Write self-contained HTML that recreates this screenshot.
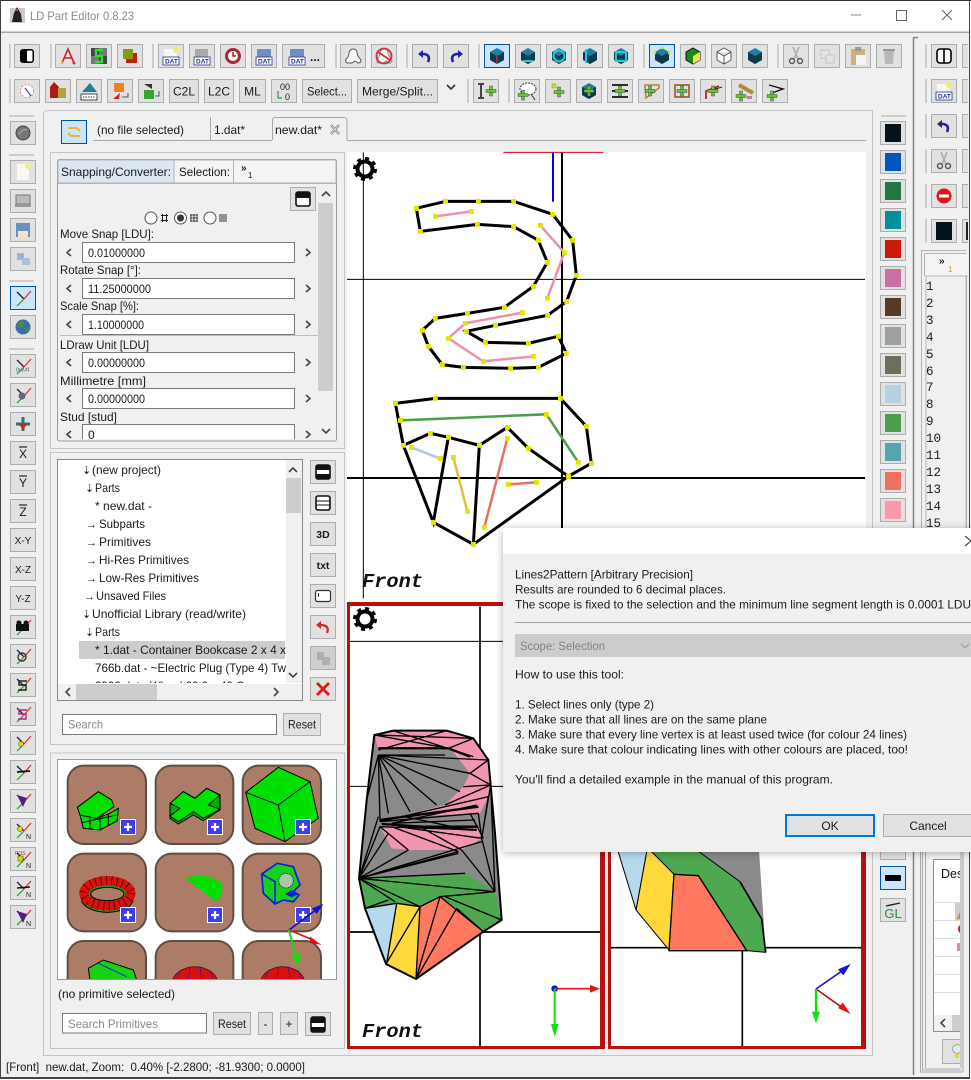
<!DOCTYPE html>
<html><head><meta charset="utf-8"><title>LD Part Editor 0.8.23</title>
<style>
html,body{margin:0;padding:0;background:#fff}
svg{display:block;font-family:"Liberation Sans",sans-serif;font-size:12px}
.t{fill:#1a1a1a}
.f{fill:#fff;stroke:#7a7a7a}
.ar{fill:none;stroke:#444;stroke-width:1.6}
.sep{stroke:#a8a8a8;stroke-width:1}
.dt{font-size:6.5px;font-weight:bold;fill:#223399}
</style></head><body>
<svg width="971" height="1080" viewBox="0 0 971 1080" xmlns="http://www.w3.org/2000/svg">
<defs>
<rect id="b" x=".5" y=".5" width="25" height="23" fill="#e1e1e1" stroke="#adadad"/>
<rect id="s" x=".5" y=".5" width="25" height="23" fill="#cce4f7" stroke="#005499"/>
<marker id="v" markerUnits="userSpaceOnUse" markerWidth="15" markerHeight="15" refX="7.5" refY="7.5"><rect width="15" height="15" fill="#e4e400"/></marker>
<g id="hex"><polygon points="13,4 20,8 20,16 13,20 6,16 6,8" fill="#1c7fa5"/><polygon points="13,12 20,8 20,16 13,20 6,16 6,8" fill="#0d3a4c"/></g>
<g id="pg"><rect x="-1.5" y="-5" width="3" height="10" fill="#68c23a" stroke="#333" stroke-width=".4"/><rect x="-5" y="-1.5" width="10" height="3" fill="#68c23a" stroke="#333" stroke-width=".4"/></g>
<g id="ax"><path d="M7 6L14 13" stroke="#223" stroke-width="1.3"/><path d="M14 13L21 5" stroke="#d33" stroke-width="1.3"/><path d="M14 13L7 20" stroke="#3a3" stroke-width="1.3"/></g>
<g id="pl"><rect width="15" height="15" fill="#3c3cf0" stroke="#fff"/><path d="M3.5 7.5H11.5M7.5 3.5V11.5" stroke="#fff" stroke-width="2.2"/></g>
<clipPath id="cTree"><rect x="58" y="460" width="228" height="223"/></clipPath>
<clipPath id="cPrim"><rect x="58" y="760" width="278" height="219"/></clipPath>
<clipPath id="cSnap"><rect x="58" y="184" width="260" height="255"/></clipPath>
<clipPath id="cR"><rect x="926" y="855" width="34" height="215"/></clipPath>
<clipPath id="cRb"><rect x="920" y="40" width="48" height="212"/></clipPath>
<filter id="sh" x="-5%" y="-5%" width="110%" height="110%"><feDropShadow dx="0" dy="1" stdDeviation="4" flood-color="#000" flood-opacity=".3"/></filter>
</defs>

<!-- window -->
<rect width="971" height="1080" fill="#fff"/>
<rect x="1" y="32" width="968" height="1046" fill="#f0f0f0"/>
<rect width="971" height="1" fill="#333"/>
<rect y="0" width="1" height="1079" fill="#444"/>
<rect x="969" y="0" width="1" height="1079" fill="#444"/>
<rect y="1077" width="970" height="2" fill="#444"/>
<rect x="1" y="31.5" width="968" height="1.5" fill="#a6a6a6"/>

<!-- title -->
<rect x="10" y="8" width="15" height="15" fill="#c9c9c9"/><path d="M17 7L21 14L22 22H12L14 13Z" fill="#222"/><rect x="16" y="9" width="2" height="2" fill="#c33"/>
<text x="30" y="20" fill="#8a8a8a" textLength="104" lengthAdjust="spacingAndGlyphs">LD Part Editor 0.8.23</text>
<path d="M851 15H861" stroke="#888"/><rect x="896.5" y="10.5" width="10" height="10" fill="none" stroke="#666"/><path d="M942 10L952 20M952 10L942 20" stroke="#666"/>

<!-- toolbar seps -->
<path class="sep" d="M10 44V68M51 44V68M153 44V68M336 44V68M407 44V68M479 44V68M644 44V68M778 44V68M926 44V68M10 79V103M468 79V103M509 79V103M926 79V103M926 114V138M926 149V173M926 184V208M926 219V243"/>

<!-- row 1 -->
<g transform="translate(14,44)"><use href="#b"/><rect x="6" y="5" width="14" height="14" rx="3" fill="#000"/><rect x="13" y="6.5" width="5.5" height="11" rx="1.5" fill="#fff"/></g>
<g transform="translate(55,44)"><use href="#b"/><path d="M7 19L13 5L19 19M9 14H17" fill="none" stroke="#c8242a" stroke-width="1.6"/><circle cx="7" cy="19" r="1.5" fill="#cc5"/><circle cx="19" cy="19" r="1.5" fill="#c33"/></g>
<g transform="translate(86,44)"><use href="#b"/><rect x="5" y="4" width="16" height="16" fill="#444"/><rect x="13" y="4" width="8" height="8" fill="#777"/><rect x="5" y="12" width="8" height="8" fill="#777"/><path d="M17 6H10V12H16V18H9" fill="none" stroke="#2ee02e" stroke-width="2.4"/></g>
<g transform="translate(117,44)"><use href="#b"/><rect x="9" y="9" width="11" height="10" fill="#c02010"/><rect x="6" y="5" width="10" height="10" fill="#8a9a10"/></g>
<g transform="translate(158,44)"><use href="#b"/><rect x="6" y="5" width="13" height="9" fill="#f6f6f6"/><circle cx="18" cy="6" r="3" fill="#eeee66"/><rect x="5" y="13" width="16" height="8" fill="#fff" stroke="#223399" stroke-width=".8"/><text x="7" y="19.5" class="dt">DAT</text></g>
<g transform="translate(189,44)"><use href="#b"/><rect x="6" y="5" width="13" height="9" fill="#a9a9a9"/><rect x="5" y="13" width="16" height="8" fill="#fff" stroke="#223399" stroke-width=".8"/><text x="7" y="19.5" class="dt">DAT</text></g>
<g transform="translate(220,44)"><use href="#b"/><circle cx="13" cy="12" r="6.5" fill="#fff" stroke="#a8293a" stroke-width="3"/><path d="M13 8V12H16" fill="none" stroke="#a8293a" stroke-width="1.6"/></g>
<g transform="translate(251,44)"><use href="#b"/><rect x="6" y="5" width="14" height="9" fill="#6f8fc2"/><rect x="5" y="13" width="16" height="8" fill="#fff" stroke="#223399" stroke-width=".8"/><text x="7" y="19.5" class="dt">DAT</text></g>
<g transform="translate(282,44)"><rect x=".5" y=".5" width="42" height="23" fill="#e1e1e1" stroke="#adadad"/><rect x="8" y="5" width="14" height="9" fill="#6f8fc2"/><rect x="7" y="13" width="16" height="8" fill="#fff" stroke="#223399" stroke-width=".8"/><text x="9" y="19.5" class="dt">DAT</text><text x="28" y="17" class="t" font-weight="bold">...</text></g>
<g transform="translate(340,44)"><use href="#b"/><path d="M8 19Q5 19 6 15Q9 13 9 9Q10 5 13 5Q17 5 17 9Q18 13 21 16Q21 19 18 19L15 17L12 19Z" fill="#fff" stroke="#555"/></g>
<g transform="translate(371,44)"><use href="#b"/><path d="M8 19Q5 19 6 15Q9 13 9 9Q10 5 13 5Q17 5 17 9Q18 13 21 16Q21 19 18 19L15 17L12 19Z" fill="#fff" stroke="#888"/><circle cx="13" cy="12" r="7.5" fill="none" stroke="#c33" stroke-width="1.8"/><path d="M7 8L19 16" stroke="#c33" stroke-width="1.8"/></g>
<g transform="translate(412,44)"><use href="#b"/><path d="M16 18Q19 11 12 10H9" fill="none" stroke="#2222a0" stroke-width="2.6"/><polygon points="6,10 11,6 11,14" fill="#2222a0"/></g>
<g transform="translate(443,44)"><use href="#b"/><path d="M10 18Q7 11 14 10H17" fill="none" stroke="#2222a0" stroke-width="2.6"/><polygon points="20,10 15,6 15,14" fill="#2222a0"/></g>
<g transform="translate(484,44)"><use href="#s"/><use href="#hex"/><path d="M13 12V20" stroke="#c33" stroke-width="1.4"/></g>
<g transform="translate(515,44)"><use href="#b"/><use href="#hex"/><path d="M8 17H18" stroke="#19d0e0" stroke-width="2"/></g>
<g transform="translate(546,44)"><use href="#b"/><use href="#hex"/><circle cx="13" cy="12" r="5.5" fill="none" stroke="#19d0e0" stroke-width="2"/></g>
<g transform="translate(577,44)"><use href="#b"/><use href="#hex"/><path d="M9 5V19" stroke="#19d0e0" stroke-width="2"/></g>
<g transform="translate(608,44)"><use href="#b"/><use href="#hex"/><rect x="8" y="8" width="10" height="9" fill="none" stroke="#19d0e0" stroke-width="2"/></g>
<g transform="translate(649,44)"><use href="#s"/><use href="#hex"/><circle cx="13" cy="4" r="1.3" fill="#dd0"/><circle cx="20" cy="9" r="1.3" fill="#dd0"/><circle cx="6" cy="9" r="1.3" fill="#dd0"/></g>
<g transform="translate(680,44)"><use href="#b"/><polygon points="13,4 20,8 20,16 13,20 6,16 6,8" fill="#1a8a1a" stroke="#111"/><polygon points="13,12 20,8 20,16 13,20" fill="#eedd55"/></g>
<g transform="translate(711,44)"><use href="#b"/><path d="M13 4L20 8V16L13 20L6 16V8ZM6 8L13 12L20 8M13 12V20" fill="#fff" stroke="#555"/></g>
<g transform="translate(742,44)"><use href="#b"/><use href="#hex"/></g>
<g transform="translate(783,44)"><use href="#b"/><path d="M10 3L15 15M16 3L11 15" stroke="#aaa" stroke-width="1.5"/><circle cx="9" cy="17" r="2.5" fill="none" stroke="#555" stroke-width="1.4"/><circle cx="17" cy="17" r="2.5" fill="none" stroke="#555" stroke-width="1.4"/></g>
<g transform="translate(814,44)"><use href="#b"/><rect x="7" y="6" width="8" height="8" fill="#e4e4e4" stroke="#c5c5c5"/><rect x="12" y="11" width="8" height="8" fill="#e4e4e4" stroke="#c5c5c5"/></g>
<g transform="translate(845,44)"><use href="#b"/><rect x="6" y="5" width="14" height="16" fill="#d0b080"/><rect x="10" y="3" width="6" height="4" fill="#999"/><rect x="11" y="11" width="10" height="10" fill="#f4f4f4"/></g>
<g transform="translate(876,44)"><use href="#b"/><path d="M8 7H18L17 20H9Z" fill="#b8b8b8"/><rect x="7" y="5" width="12" height="2" fill="#999"/></g>

<!-- row 2 -->
<g transform="translate(14,79)"><use href="#b"/><circle cx="13" cy="12" r="6.5" fill="#fff" stroke="#d88" stroke-dasharray="2 1.5"/><path d="M11 9L17 17" stroke="#55a" stroke-width="1.3"/></g>
<g transform="translate(45,79)"><use href="#b"/><rect x="5" y="8" width="9" height="11" fill="#b01818"/><polygon points="9,3 14,8 5,8" fill="#b01818"/><rect x="13" y="9" width="8" height="10" fill="#b5a338"/></g>
<g transform="translate(76,79)"><use href="#b"/><polygon points="6,13 14,4 21,13" fill="#1d7f9f"/><rect x="5" y="15" width="16" height="6" fill="#fff" stroke="#222" stroke-width=".8"/><path d="M7 18H19" stroke="#444" stroke-dasharray="1.5 1"/></g>
<g transform="translate(107,79)"><use href="#b"/><rect x="7" y="4" width="10" height="9" fill="#f08020"/><polygon points="6,20 13,14 12,20" fill="#c22"/><path d="M15 18H21V14" fill="none" stroke="#555"/></g>
<g transform="translate(138,79)"><use href="#b"/><rect x="6" y="11" width="10" height="9" fill="#2ea82e"/><polygon points="6,5 14,5 14,10" fill="#333"/><path d="M17 17H21V12" fill="none" stroke="#555"/></g>
<g transform="translate(169,79)"><rect x=".5" y=".5" width="29" height="23" fill="#e1e1e1" stroke="#adadad"/><text x="15" y="16.5" text-anchor="middle" class="t">C2L</text></g>
<g transform="translate(204,79)"><rect x=".5" y=".5" width="29" height="23" fill="#e1e1e1" stroke="#adadad"/><text x="15" y="16.5" text-anchor="middle" class="t">L2C</text></g>
<g transform="translate(239,79)"><rect x=".5" y=".5" width="26" height="23" fill="#e1e1e1" stroke="#adadad"/><text x="13.5" y="16.5" text-anchor="middle" class="t">ML</text></g>
<g transform="translate(271,79)"><use href="#b"/><text x="9" y="11" font-size="9" class="t">00</text><text x="14" y="21" font-size="9" class="t">0</text><path d="M7 12V19H11" fill="none" stroke="#393" stroke-width="1.2"/></g>
<g transform="translate(302,79)"><rect x=".5" y=".5" width="49" height="23" fill="#e1e1e1" stroke="#adadad"/><text x="5" y="16.5" class="t" textLength="40" lengthAdjust="spacingAndGlyphs">Select...</text></g>
<g transform="translate(357,79)"><rect x=".5" y=".5" width="80" height="23" fill="#e1e1e1" stroke="#adadad"/><text x="5" y="16.5" class="t" textLength="71" lengthAdjust="spacingAndGlyphs">Merge/Split...</text></g>
<path d="M447 85L451 89L455 85" fill="none" stroke="#333" stroke-width="1.6"/>
<g transform="translate(473,79)"><use href="#b"/><path d="M5 5H11M8 5V19M5 19H11" stroke="#444" stroke-width="2" fill="none"/><use href="#pg" x="18" y="12"/></g>
<g transform="translate(514,79)"><use href="#b"/><ellipse cx="14" cy="10" rx="8" ry="6" fill="#fff" stroke="#333" stroke-dasharray="2 1"/><path d="M17 15L21 21" stroke="#333"/><use href="#pg" x="9" y="16"/></g>
<g transform="translate(545,79)"><use href="#b"/><rect x="7" y="5" width="4" height="4" fill="#dd0" stroke="#888" stroke-width=".5"/><use href="#pg" x="14" y="13"/></g>
<g transform="translate(576,79)"><use href="#b"/><use href="#hex"/><use href="#pg" x="13" y="12"/></g>
<g transform="translate(607,79)"><use href="#b"/><path d="M5 6H21M5 12H21M5 18H21" stroke="#111" stroke-width="1.8"/><use href="#pg" x="13" y="12"/></g>
<g transform="translate(638,79)"><use href="#b"/><path d="M7 6H21V9L8 19Z" fill="none" stroke="#b4883a" stroke-width="1.6"/><use href="#pg" x="12" y="12"/></g>
<g transform="translate(669,79)"><use href="#b"/><rect x="6" y="6" width="14" height="12" fill="none" stroke="#a4643a" stroke-width="1.8"/><use href="#pg" x="13" y="12"/></g>
<g transform="translate(700,79)"><use href="#b"/><path d="M6 20V12L19 7" fill="none" stroke="#b22" stroke-width="1.8"/><path d="M9 12L22 8" stroke="#222"/><use href="#pg" x="13" y="12"/></g>
<g transform="translate(731,79)"><use href="#b"/><path d="M8 6L22 14" stroke="#b4883a" stroke-width="4"/><use href="#pg" x="10" y="17"/><rect x="16" y="17" width="5" height="3" fill="#a89"/></g>
<g transform="translate(762,79)"><use href="#b"/><path d="M7 6L21 10L10 14" fill="none" stroke="#111" stroke-width="1.4"/><use href="#pg" x="10" y="17"/></g>

<!-- left col seps -->
<path stroke="#a8a8a8" d="M9 116H34M9 155H34M9 281H34M9 349H34M881 116H906"/>
<!-- left col -->
<g transform="translate(10,121)"><use href="#b"/><circle cx="13" cy="12" r="7" fill="#777" stroke="#444"/><path d="M9 13Q13 7 17 9" fill="none" stroke="#aaa"/></g>
<g transform="translate(10,160)"><use href="#b"/><rect x="7" y="4" width="12" height="16" fill="#f8f8f0"/><circle cx="18" cy="6" r="3" fill="#eeee88"/></g>
<g transform="translate(10,189)"><use href="#b"/><rect x="6" y="6" width="14" height="9" fill="#bbb" stroke="#777"/><rect x="5" y="15" width="16" height="3" fill="#999"/></g>
<g transform="translate(10,218)"><use href="#b"/><rect x="6" y="5" width="14" height="14" fill="#6f8fc2"/><rect x="8" y="13" width="10" height="6" fill="#f4e6b8"/></g>
<g transform="translate(10,247)"><use href="#b"/><rect x="7" y="6" width="7" height="7" fill="#9db3d4"/><rect x="12" y="11" width="8" height="7" fill="#aac0dd"/></g>
<g transform="translate(10,286)"><use href="#s"/><use href="#ax"/></g>
<g transform="translate(10,315)"><use href="#b"/><circle cx="13" cy="12" r="7.5" fill="#3a6ea8"/><path d="M8 8L14 6L13 12L9 13ZM15 14L19 12L18 18Z" fill="#4b8f3a"/></g>
<g transform="translate(10,354)"><use href="#b"/><use href="#ax"/><text x="6" y="17" font-size="5" fill="#445">(x,y,z)</text></g>
<g transform="translate(10,383)"><use href="#b"/><use href="#ax"/><circle cx="12" cy="13" r="3.5" fill="#667"/></g>
<g transform="translate(10,412)"><use href="#b"/><path d="M13 5V19M6 12H20" stroke="#1a7a7a" stroke-width="3"/><polygon points="9,12 17,12 13,18" fill="#c22"/></g>
<g transform="translate(10,441)"><use href="#b"/><text x="13" y="17" text-anchor="middle" class="t" font-size="12">X</text><path d="M9 6H17" stroke="#222" stroke-width="1.2"/></g>
<g transform="translate(10,470)"><use href="#b"/><text x="13" y="17" text-anchor="middle" class="t" font-size="12">Y</text><path d="M9 6H17" stroke="#222" stroke-width="1.2"/></g>
<g transform="translate(10,499)"><use href="#b"/><text x="13" y="17" text-anchor="middle" class="t" font-size="12">Z</text><path d="M9 6H17" stroke="#222" stroke-width="1.2"/></g>
<g transform="translate(10,528)"><use href="#b"/><text x="13" y="16" text-anchor="middle" class="t" font-size="10">X-Y</text></g>
<g transform="translate(10,557)"><use href="#b"/><text x="13" y="16" text-anchor="middle" class="t" font-size="10">X-Z</text></g>
<g transform="translate(10,586)"><use href="#b"/><text x="13" y="16" text-anchor="middle" class="t" font-size="10">Y-Z</text></g>
<g transform="translate(10,615)"><use href="#b"/><use href="#ax"/><rect x="6" y="9" width="13" height="7" fill="#111"/><circle cx="9" cy="8" r="2.5" fill="#111"/><circle cx="16" cy="8" r="2.5" fill="#111"/></g>
<g transform="translate(10,644)"><use href="#b"/><use href="#ax"/><circle cx="12" cy="13" r="4" fill="none" stroke="#333" stroke-width="1.4"/></g>
<g transform="translate(10,673)"><use href="#b"/><use href="#ax"/><path d="M17 8H9V12H16V17H8" fill="none" stroke="#222" stroke-width="1.4"/></g>
<g transform="translate(10,702)"><use href="#b"/><use href="#ax"/><path d="M17 8H9V12H16V17H8" fill="none" stroke="#b28" stroke-width="1.4"/></g>
<g transform="translate(10,731)"><use href="#b"/><use href="#ax"/><circle cx="11" cy="13" r="2.5" fill="#dd0" stroke="#333" stroke-width=".5"/></g>
<g transform="translate(10,760)"><use href="#b"/><use href="#ax"/><path d="M7 12L20 11" stroke="#111" stroke-width="1.8"/></g>
<g transform="translate(10,789)"><use href="#b"/><use href="#ax"/><polygon points="7,6 17,9 13,18" fill="#502080"/></g>
<g transform="translate(10,818)"><use href="#b"/><use href="#ax"/><circle cx="10" cy="11" r="2.5" fill="#dd0" stroke="#333" stroke-width=".5"/><text x="16" y="21" font-size="7" class="t">N</text></g>
<g transform="translate(10,847)"><use href="#b"/><use href="#ax"/><text x="5" y="8" font-size="5" fill="#a33">POS</text><rect x="8" y="9" width="5" height="5" fill="#dd0" stroke="#333" stroke-width=".5"/><text x="16" y="21" font-size="7" class="t">N</text></g>
<g transform="translate(10,876)"><use href="#b"/><use href="#ax"/><path d="M7 12L20 11" stroke="#111" stroke-width="1.6"/><text x="16" y="21" font-size="7" class="t">N</text></g>
<g transform="translate(10,905)"><use href="#b"/><use href="#ax"/><polygon points="7,6 17,9 13,18" fill="#502080"/><text x="16" y="21" font-size="7" class="t">N</text></g>

<!-- main tab panel -->
<path d="M43.5 1055.5V115Q43.5 110.5 48 110.5H872.5V1055.5Z" fill="#f0f0f0" stroke="#c4c4c4"/>
<path d="M93 140.5H272M347 140.5H866" stroke="#a8a8a8"/>
<g transform="translate(61,120)"><rect x=".5" y=".5" width="25" height="23" fill="#cce4f7" stroke="#005499"/><path d="M7 8H16L19 11M19 16H10L7 13" fill="none" stroke="#e6b82e" stroke-width="2"/></g>
<text x="97" y="134" class="t" textLength="87" lengthAdjust="spacingAndGlyphs">(no file selected)</text>
<path d="M210.5 117V140" stroke="#a8a8a8"/>
<text x="214" y="134" class="t" textLength="31" lengthAdjust="spacingAndGlyphs">1.dat*</text>
<path d="M272.5 140V120Q272.5 117.5 275 117.5H344Q347 117.5 347 120V140" fill="#f0f0f0" stroke="#a8a8a8"/>
<text x="275" y="134" class="t" textLength="47" lengthAdjust="spacingAndGlyphs">new.dat*</text>
<path d="M331 125L339 134M339 125L331 134" stroke="#777" stroke-width="2.4"/><path d="M331 125L339 134M339 125L331 134" stroke="#eee" stroke-width=".9"/>

<!-- snap group -->
<rect x="50.5" y="152.5" width="294" height="296" fill="#f0f0f0" stroke="#c4c4c4"/>
<rect x="57.5" y="159.5" width="279" height="281.5" rx="2" fill="#f0f0f0" stroke="#9a9a9a"/>
<path d="M57.5 183.5H336" stroke="#b4b4b4"/>
<path d="M58 183V162Q58 160 60 160H174V183Z" fill="#dbe8f3" stroke="#b4b4b4"/>
<path d="M174 160H233.5V183H174Z" fill="#f4f4f4" stroke="#b4b4b4"/>
<path d="M233.5 160H336V183H233.5Z" fill="#f4f4f4" stroke="#b4b4b4"/>
<text x="61" y="176" class="t" textLength="110" lengthAdjust="spacingAndGlyphs">Snapping/Converter:</text>
<text x="179" y="176" class="t" textLength="51" lengthAdjust="spacingAndGlyphs">Selection:</text>
<text x="241" y="171" font-size="10" class="t" font-weight="bold">»</text><text x="248" y="178" font-size="8" class="t">1</text>
<!-- scrollbar -->
<rect x="318" y="186" width="15" height="253" fill="#f0f0f0"/><rect x="318" y="203" width="15" height="188" fill="#cdcdcd"/>
<path d="M322 196L326 192L330 196M322 429L326 433L330 429" class="ar"/>
<g transform="translate(290,187)"><use href="#b"/><rect x="6" y="5" width="14" height="14" rx="2" fill="#fff" stroke="#111" stroke-width="1.6"/><rect x="6" y="5" width="14" height="6" rx="1" fill="#111"/></g>
<!-- radios -->
<g fill="#fff" stroke="#555"><circle cx="151" cy="218" r="6"/><circle cx="180.500" cy="218" r="6"/><circle cx="210" cy="218" r="6"/></g><circle cx="180.500" cy="218" r="3.5" fill="#333"/>
<path d="M161 215.500H168M161 220.500H168M162.500 214V222M166.500 214V222" stroke="#222" fill="none"/>
<path d="M190 215H198M190 218H198M190 221H198M191 214V222M194 214V222M197 214V222" stroke="#222" fill="none" stroke-width=".8"/>
<path d="M219 215H227M219 217H227M219 219H227M219 221H227M220 214V222M222 214V222M224 214V222M226 214V222" stroke="#222" fill="none" stroke-width=".55"/>
<!-- fields -->
<g clip-path="url(#cSnap)">
<text x="60" y="238" class="t" textLength="94" lengthAdjust="spacingAndGlyphs">Move Snap [LDU]:</text>
<text x="60" y="274" class="t" textLength="81" lengthAdjust="spacingAndGlyphs">Rotate Snap [°]:</text>
<text x="60" y="310" class="t" textLength="79" lengthAdjust="spacingAndGlyphs">Scale Snap [%]:</text>
<path d="M60 335.500H318" stroke="#bdbdbd"/>
<text x="60" y="349" class="t" textLength="89" lengthAdjust="spacingAndGlyphs">LDraw Unit [LDU]</text>
<text x="60" y="385" class="t" textLength="86" lengthAdjust="spacingAndGlyphs">Millimetre [mm]</text>
<text x="60" y="421" class="t" textLength="57" lengthAdjust="spacingAndGlyphs">Stud [stud]</text>
<rect class="f" x="82.500" y="242.500" width="212" height="20"/><rect class="f" x="82.500" y="278.500" width="212" height="20"/><rect class="f" x="82.500" y="314.500" width="212" height="20"/><rect class="f" x="82.500" y="352.500" width="212" height="20"/><rect class="f" x="82.500" y="388.500" width="212" height="20"/><rect class="f" x="82.500" y="424.500" width="212" height="20"/>
<text x="88" y="257" class="t" textLength="57" lengthAdjust="spacingAndGlyphs">0.01000000</text>
<text x="88" y="293" class="t" textLength="63" lengthAdjust="spacingAndGlyphs">11.25000000</text>
<text x="88" y="329" class="t" textLength="56" lengthAdjust="spacingAndGlyphs">1.10000000</text>
<text x="88" y="367" class="t" textLength="57" lengthAdjust="spacingAndGlyphs">0.00000000</text>
<text x="88" y="403" class="t" textLength="57" lengthAdjust="spacingAndGlyphs">0.00000000</text>
<text x="88" y="439" class="t">0</text>
<path class="ar" d="M71 249L67 252.500L71 256M71 285L67 288.500L71 292M71 321L67 324.500L71 328M71 359L67 362.500L71 366M71 395L67 398.500L71 402M71 431L67 434.500L71 438M306 249L310 252.500L306 256M306 285L310 288.500L306 292M306 321L310 324.500L306 328M306 359L310 362.500L306 366M306 395L310 398.500L306 402M306 431L310 434.500L306 438"/>
</g>

<!-- tree group -->
<rect x="50.500" y="452.500" width="294" height="292" fill="#f0f0f0" stroke="#c4c4c4"/>
<rect x="57.500" y="459.500" width="245" height="241" fill="#fff" stroke="#8a8a8a"/>
<rect x="79" y="641" width="206" height="18" fill="#cdcdcd"/>
<g clip-path="url(#cTree)" class="t">
<text x="82" y="474" font-size="11">⇣</text><text x="92" y="474" textLength="69" lengthAdjust="spacingAndGlyphs">(new project)</text>
<text x="85" y="492" font-size="11">⇣</text><text x="95" y="492" textLength="25" lengthAdjust="spacingAndGlyphs">Parts</text>
<text x="95" y="510" textLength="57" lengthAdjust="spacingAndGlyphs">* new.dat -</text>
<text x="86" y="528" font-size="11">→</text><text x="99" y="528" textLength="46" lengthAdjust="spacingAndGlyphs">Subparts</text>
<text x="86" y="546" font-size="11">→</text><text x="99" y="546" textLength="52" lengthAdjust="spacingAndGlyphs">Primitives</text>
<text x="86" y="564" font-size="11">→</text><text x="99" y="564" textLength="90" lengthAdjust="spacingAndGlyphs">Hi-Res Primitives</text>
<text x="86" y="582" font-size="11">→</text><text x="99" y="582" textLength="100" lengthAdjust="spacingAndGlyphs">Low-Res Primitives</text>
<text x="84" y="600" font-size="11">→</text><text x="96" y="600" textLength="70" lengthAdjust="spacingAndGlyphs">Unsaved Files</text>
<text x="82" y="618" font-size="11">⇣</text><text x="92" y="618" textLength="154" lengthAdjust="spacingAndGlyphs">Unofficial Library (read/write)</text>
<text x="85" y="636" font-size="11">⇣</text><text x="95" y="636" textLength="25" lengthAdjust="spacingAndGlyphs">Parts</text>
<text x="95" y="654" textLength="191" lengthAdjust="spacingAndGlyphs">* 1.dat - Container Bookcase  2 x  4 x</text>
<text x="95" y="672" textLength="191" lengthAdjust="spacingAndGlyphs">766b.dat - ~Electric Plug (Type 4) Tw</text>
<text x="95" y="690" textLength="150" lengthAdjust="spacingAndGlyphs">2926.dat - Wheel 60.0 x 40 O</text>
</g>
<rect x="286" y="460" width="16" height="223" fill="#f0f0f0"/><rect x="286" y="478" width="15" height="35" fill="#cdcdcd"/>
<path class="ar" d="M289 472L293 468L297 472M289 673L293 677L297 673"/>
<rect x="58" y="684" width="244" height="16" fill="#f0f0f0"/><rect x="76" y="684" width="81" height="16" fill="#cdcdcd"/>
<path class="ar" d="M70 688L66 692L70 696M274 688L278 692L274 696"/>
<g transform="translate(310,460)"><use href="#b"/><rect x="6" y="5" width="14" height="14" rx="2" fill="#fff" stroke="#111" stroke-width="1.6"/><rect x="6" y="5" width="14" height="5" fill="#111"/><rect x="6" y="14" width="14" height="5" fill="#111"/></g>
<g transform="translate(310,491)"><use href="#b"/><rect x="6" y="5" width="14" height="14" rx="2" fill="#fff" stroke="#111" stroke-width="1.6"/><path d="M6 10H20M6 14H20" stroke="#111"/></g>
<g transform="translate(310,522)"><use href="#b"/><text x="13" y="16" text-anchor="middle" font-size="10.500" font-weight="bold" class="t">3D</text></g>
<g transform="translate(310,553)"><use href="#b"/><text x="13" y="16" text-anchor="middle" font-size="10.500" font-weight="bold" class="t">txt</text></g>
<g transform="translate(310,584)"><use href="#b"/><rect x="5.500" y="6.500" width="15" height="11" rx="2" fill="#fff" stroke="#333" stroke-width="1.2"/><path d="M8.500 9V13" stroke="#333"/></g>
<g transform="translate(310,615)"><use href="#b"/><path d="M17 18Q20 11 12 10H9" fill="none" stroke="#d02828" stroke-width="2.200"/><polygon points="6,10 11,6 11,14" fill="#d02828"/></g>
<g transform="translate(310,646)"><rect x=".5" y=".5" width="25" height="23" fill="#cfcfcf" stroke="#adadad"/><rect x="7" y="6" width="7" height="8" fill="#b0b0b0"/><rect x="12" y="11" width="8" height="8" fill="#b0b0b0"/></g>
<g transform="translate(310,677)"><use href="#b"/><path d="M7 6L19 18M19 6L7 18" stroke="#e01818" stroke-width="2.800"/></g>
<rect class="f" x="62.500" y="714.500" width="214" height="20"/><text x="68" y="728.500" fill="#8a8a8a" textLength="35" lengthAdjust="spacingAndGlyphs">Search</text>
<rect x="283.500" y="713.500" width="37" height="22" fill="#e1e1e1" stroke="#adadad"/><text x="288" y="728.500" class="t" textLength="28" lengthAdjust="spacingAndGlyphs">Reset</text>

<!-- primitives group -->
<rect x="50.500" y="753" width="294" height="295.500" fill="#f0f0f0" stroke="#c4c4c4"/>
<rect x="57.500" y="759.500" width="279" height="220" fill="#fff" stroke="#9a9a9a"/>
<g clip-path="url(#cPrim)"><g transform="translate(0,750) scale(.33333)">
<g fill="#ac7c66" stroke="#5c5046" stroke-width="6">
<rect x="203" y="47" width="235" height="235" rx="48"/><rect x="467" y="47" width="233" height="235" rx="48"/><rect x="728" y="47" width="235" height="235" rx="48"/>
<rect x="203" y="311" width="235" height="233" rx="48"/><rect x="467" y="311" width="233" height="233" rx="48"/><rect x="728" y="311" width="235" height="233" rx="48"/>
<rect x="203" y="573" width="235" height="233" rx="48"/><rect x="467" y="573" width="233" height="233" rx="48"/><rect x="728" y="573" width="235" height="233" rx="48"/></g>
<g stroke="#000" stroke-width="3" fill="#00e000">
<polygon points="240,195 250,235 300,240 352,212 355,175 330,190 290,205"/><path d="M245 218L350 195M270 205V238M300 200V240M325 192V226" fill="none"/>
<polygon points="232,172 295,125 335,150 342,170 290,205 240,195"/>
<polygon points="510,165 510,205 535,222 580,195 610,212 660,180 660,135 620,115 585,145 550,125" fill="#00b000"/>
<polygon points="510,160 550,125 585,145 620,115 660,135 625,165 660,178 610,205 580,185 535,215 510,198 540,175"/>
<polygon points="737,127 835,52 930,95 955,205 855,275 765,235"/><path d="M737 127L835 165L930 95M835 165L855 275" fill="none"/>
</g>
<ellipse cx="322" cy="445" rx="78" ry="42" fill="#18a018" stroke="#000" stroke-width="3"/>
<ellipse cx="322" cy="430" rx="70" ry="38" fill="none" stroke="#d81010" stroke-width="28"/><ellipse cx="322" cy="430" rx="70" ry="38" fill="none" stroke="#300" stroke-width="28" stroke-dasharray="2 14"/>
<ellipse cx="322" cy="432" rx="50" ry="20" fill="#ac7c66" stroke="#000" stroke-width="3"/>
<path d="M555 385Q620 365 665 400Q672 430 650 455Z" fill="#00e000"/>
<polygon points="785,372 832,340 880,350 900,405 880,425 897,435 880,455 850,450 825,462 790,430" fill="#18d018" stroke="#0020e0" stroke-width="5"/><path d="M785 372L825 395V462" fill="none" stroke="#0020e0" stroke-width="5"/><circle cx="858" cy="392" r="22" fill="#a8c8a8" stroke="#334" stroke-width="3" stroke-dasharray="5 3"/><polygon points="855,432 875,420 895,432 875,442" fill="#0020e0"/>
<polygon points="265,655 310,630 400,660 410,690 270,690" fill="#18d018" stroke="#000" stroke-width="3"/><path d="M295 640L380 680" stroke="#0030c0" stroke-width="3"/>
<ellipse cx="585" cy="705" rx="70" ry="55" fill="#d81010" stroke="#300" stroke-width="2"/><path d="M540 660L530 690M570 650L565 690M600 650L605 690M630 660L640 690" stroke="#2020c0" stroke-width="2"/>
<ellipse cx="848" cy="705" rx="68" ry="55" fill="#d81010" stroke="#300" stroke-width="2"/><path d="M805 660L795 690M835 650L830 690M865 650L870 690M895 660L905 690" stroke="#2020c0" stroke-width="2"/>
</g>
<g><use href="#pl" x="120.500" y="819.500"/><use href="#pl" x="207.500" y="819.500"/><use href="#pl" x="295.500" y="819.500"/><use href="#pl" x="120.500" y="907.500"/><use href="#pl" x="207.500" y="907.500"/><use href="#pl" x="295.500" y="907.500"/></g>
<g transform="translate(0,750) scale(.33333)">
<path d="M867 540L950 478" stroke="#1010e0" stroke-width="5"/><polygon points="970,462 935,475 950,492" fill="#1010e0"/>
<path d="M867 540L940 570" stroke="#e01010" stroke-width="5"/><polygon points="965,585 930,560 930,578" fill="#e01010"/>
<path d="M867 540L888 620" stroke="#10e010" stroke-width="6"/><polygon points="892,650 875,615 903,612" fill="#10e010"/>
</g></g>
<text x="58" y="998" class="t" textLength="117" lengthAdjust="spacingAndGlyphs">(no primitive selected)</text>
<rect class="f" x="62.500" y="1013.500" width="144" height="19.500"/><text x="68" y="1028" fill="#8a8a8a" textLength="90" lengthAdjust="spacingAndGlyphs">Search Primitives</text>
<rect x="213.500" y="1012.500" width="37" height="22" fill="#e1e1e1" stroke="#adadad"/><text x="218" y="1028" class="t" textLength="28" lengthAdjust="spacingAndGlyphs">Reset</text>
<rect x="258.500" y="1012.500" width="14" height="22" fill="#e1e1e1" stroke="#adadad"/><text x="265.500" y="1028" text-anchor="middle" class="t">-</text>
<rect x="280.500" y="1012.500" width="17" height="22" fill="#e1e1e1" stroke="#adadad"/><text x="289" y="1028" text-anchor="middle" class="t">+</text>
<g transform="translate(305,1012)"><use href="#b"/><rect x="6" y="5" width="14" height="15" rx="2" fill="#fff" stroke="#111" stroke-width="1.600"/><rect x="6" y="5" width="14" height="6" rx="1" fill="#111"/><rect x="6" y="15" width="14" height="5" rx="1" fill="#111"/></g>

<!-- status -->
<text x="6" y="1071" class="t" textLength="299" lengthAdjust="spacingAndGlyphs" xml:space="preserve">[Front]  new.dat, Zoom:  0.40% [-2.2800; -81.9300; 0.0000]</text>

<!-- viewport top -->
<rect x="347" y="152" width="519" height="450" fill="#fff"/>
<g transform="translate(345,150) scale(.33333)" fill="none">
<path d="M55 7V1345M6 388H1560" stroke="#000" stroke-width="3"/>
<path d="M651 7V1345M6 984H1560" stroke="#000" stroke-width="6"/>
<path d="M475 7H775" stroke="#e00020" stroke-width="3"/><path d="M624 7V155" stroke="#0000e0" stroke-width="6"/>
<g stroke="#000" stroke-width="9" stroke-linejoin="miter" marker-start="url(#v)" marker-mid="url(#v)" marker-end="url(#v)">
<polyline points="214,175 302,154 400,154 506,154 623,193 683,271 694,376 665,454 608,496 452,526 364,544 421,577 550,580 640,559 664,610 580,652 497,655 355,652 292,644 250,589 232,541 271,505 367,490 478,472 565,409 607,337 580,271 506,230 397,223 226,244 214,175"/>
<polyline points="151,760 271,745 646,745 724,829 739,940 670,979 550,895 487,832 403,886 310,862 256,850 175,886 151,760"/>
<polyline points="175,886 265,1117 310,862"/><polyline points="403,886 385,1183"/><polyline points="265,1117 385,1183 670,979"/>
</g>
<g stroke-width="7.500" marker-start="url(#v)" marker-mid="url(#v)" marker-end="url(#v)">
<g stroke="#ef8fac"><polyline points="271,199 379,184"/><polyline points="586,226 658,308 607,445"/><polyline points="532,488 361,520 310,565 415,634 565,619"/></g>
<polyline stroke="#4b9f4a" points="166,811 604,793 700,937"/>
<polyline stroke="#b4c8d8" points="199,892 286,926"/>
<polyline stroke="#e6bc3c" points="325,922 367,1084"/>
<polyline stroke="#ea7060" points="487,865 418,1132"/><polyline stroke="#ea7060" points="490,1003 574,997"/>
</g></g>
<circle cx="365" cy="169" r="7.500" fill="none" stroke="#000" stroke-width="4"/><circle cx="365" cy="169" r="10.500" fill="none" stroke="#000" stroke-width="3" stroke-dasharray="4 4.200"/>
<text x="362" y="587" font-family="Liberation Mono,monospace" font-size="19" font-weight="bold" font-style="italic" fill="#111" textLength="61" lengthAdjust="spacingAndGlyphs">Front</text>

<!-- viewport bottom-left -->
<rect x="347" y="602" width="258" height="447" fill="#fff"/>
<g transform="translate(345,600) scale(.33333)">
<path d="M15 124H765M15 559H765" stroke="#000" stroke-width="3"/>
<path d="M405 20V1340M15 996H765" stroke="#000" stroke-width="5"/>
<polygon points="88,405 145,392 305,392 385,415 430,480 437,555 450,700 470,960 415,995 213,1137 123,1092 60,925 42,835 65,600" fill="#8a8a8a"/>
<g fill="#f296b0"><polygon points="90,410 145,392 305,392 385,415 430,480 375,520 320,450 100,450"/><polygon points="430,480 437,555 430,590 300,615 355,560 375,520"/><polygon points="105,665 300,615 430,590 405,640 180,650"/><polygon points="105,680 160,672 405,685 412,715 350,750 190,750 140,745"/></g>
<polygon points="42,835 360,820 450,875 470,960 415,995 335,925 280,890 225,920 60,925" fill="#4da84f"/>
<polygon points="60,925 155,910 125,1090" fill="#b8d8ec"/>
<polygon points="155,910 225,920 213,1137 123,1092" fill="#ffd83c"/>
<polygon points="225,920 285,890 335,925 415,995 213,1137" fill="#ff7860"/>
<g fill="none" stroke="#000" stroke-width="4">
<path d="M100 465L375 520M100 465L300 465M100 465L345 575M100 465L275 615M100 465L195 635M100 465L130 640M100 465L105 665M100 465L65 600M100 465L430 480M88 405L385 415M88 405L310 445M145 392L385 470M305 392L100 450M385 415L310 445M430 480L375 520M375 520L437 555M300 615L437 555M355 560L430 555"/>
<path d="M105 665L430 590M140 670L395 615M105 680L395 690M105 665L400 640M140 670L390 660M180 650L370 690M105 680L190 750M140 680L340 755M160 680L410 715M225 680L350 750M400 640L410 715M375 640L415 715M430 590L410 715M437 555L450 875M437 555L410 715M410 715L450 875M350 750L450 875"/>
<path d="M42 835L105 680M42 835L130 700M42 835L190 750M42 835L340 755M42 835L340 760M42 835L410 725M42 835L360 820M42 835L450 875M42 835L225 920M42 835L150 905M42 835L60 925M42 835L100 650"/>
<path d="M60 925L155 910L225 920L285 890L450 875M155 910L125 1090M225 920L123 1092M225 920L213 1137M285 890L213 1137M335 925L213 1137M335 925L415 995M285 890L415 995M300 890L470 960M60 925L130 900"/>
</g>
<polygon points="88,405 145,392 305,392 385,415 430,480 437,555 450,700 470,960 415,995 213,1137 123,1092 60,925 42,835 65,600" fill="none" stroke="#000" stroke-width="6"/>
<path d="M100 445L310 445L375 470M105 660L400 620M110 672L395 690M160 680L400 680" stroke="#000" stroke-width="7" fill="none"/>
<circle cx="629" cy="1166" r="10" fill="#1010e0"/><path d="M629 1166H745" stroke="#f01010" stroke-width="5"/><polygon points="735,1155 735,1178 765,1166" fill="#e01010"/>
<path d="M629 1166V1285" stroke="#10e010" stroke-width="6"/><polygon points="618,1272 641,1272 629,1310" fill="#10e010"/>
</g>
<text x="362" y="1037" font-family="Liberation Mono,monospace" font-size="19" font-weight="bold" font-style="italic" fill="#111" textLength="61" lengthAdjust="spacingAndGlyphs">Front</text>
<circle cx="365" cy="619" r="7.500" fill="none" stroke="#000" stroke-width="4"/><circle cx="365" cy="619" r="10.500" fill="none" stroke="#000" stroke-width="3" stroke-dasharray="4 4.200"/>
<rect x="348.500" y="603.500" width="254" height="444" fill="none" stroke="#b81010" stroke-width="3"/>
<rect x="600" y="602" width="5" height="447" fill="#b81010"/><rect x="347" y="602" width="258" height="4" fill="#b81010"/>

<!-- viewport bottom-right -->
<rect x="608" y="602" width="258" height="447" fill="#fff"/>
<g transform="translate(600,840) scale(.33333)">
<path d="M33 323H783" stroke="#000" stroke-width="5"/><path d="M427 332V620" stroke="#000" stroke-width="5"/>
<polygon points="290,30 477,30 497,337 420,125" fill="#8a8a8a"/>
<polygon points="150,30 290,30 420,125 485,237 497,337 440,332 295,107 222,103" fill="#4da84f" stroke="#000" stroke-width="3"/>
<polygon points="141,30 150,30 222,103 207,330 108,210" fill="#ffd83c" stroke="#000" stroke-width="3"/>
<polygon points="53,30 141,30 108,210" fill="#b8d8ec" stroke="#000" stroke-width="3"/>
<polygon points="222,103 295,107 440,332 207,332" fill="#ff7860" stroke="#000" stroke-width="4"/>
<path d="M420 125L485 237L497 337" stroke="#000" stroke-width="5" fill="none"/>
<path d="M648 447L730 390" stroke="#1010e0" stroke-width="5"/><polygon points="752,372 714,388 730,406" fill="#1010e0"/>
<path d="M648 447L730 505" stroke="#c01010" stroke-width="5"/><polygon points="752,522 714,504 728,488" fill="#f01010"/>
<path d="M648 447V525" stroke="#10e010" stroke-width="7"/><polygon points="636,515 660,515 648,550" fill="#10e010"/>
</g>
<rect x="609.500" y="603.500" width="255" height="444" fill="none" stroke="#b81010" stroke-width="3"/>
<rect x="861" y="602" width="5" height="447" fill="#b81010"/><rect x="608" y="602" width="258" height="4" fill="#b81010"/>

<!-- palette -->
<g transform="translate(880,0)">
<use href="#b" y="121"/><rect x="5" y="124" width="16" height="18" fill="#05131d"/>
<use href="#b" y="150"/><rect x="5" y="153" width="16" height="18" fill="#0055bf"/>
<use href="#b" y="179"/><rect x="5" y="182" width="16" height="18" fill="#237841"/>
<use href="#b" y="208"/><rect x="5" y="211" width="16" height="18" fill="#008f9b"/>
<use href="#b" y="237"/><rect x="5" y="240" width="16" height="18" fill="#c91a09"/>
<use href="#b" y="266"/><rect x="5" y="269" width="16" height="18" fill="#c870a0"/>
<use href="#b" y="295"/><rect x="5" y="298" width="16" height="18" fill="#583927"/>
<use href="#b" y="324"/><rect x="5" y="327" width="16" height="18" fill="#9ba19d"/>
<use href="#b" y="353"/><rect x="5" y="356" width="16" height="18" fill="#6d6e5c"/>
<use href="#b" y="382"/><rect x="5" y="385" width="16" height="18" fill="#b4d2e3"/>
<use href="#b" y="411"/><rect x="5" y="414" width="16" height="18" fill="#4b9f4a"/>
<use href="#b" y="440"/><rect x="5" y="443" width="16" height="18" fill="#55a5af"/>
<use href="#b" y="469"/><rect x="5" y="472" width="16" height="18" fill="#f2705e"/>
<use href="#b" y="498"/><rect x="5" y="501" width="16" height="18" fill="#fc97ac"/>
<use href="#b" y="836"/>
<use href="#s" y="866"/><rect x="5" y="875" width="16" height="6" rx="1" fill="#000"/>
<use href="#b" y="898"/><text x="13" y="918" text-anchor="middle" font-size="13" fill="#2a8a3a">GL</text><path d="M6 906L20 903" stroke="#222" stroke-width="1.400"/>
</g>

<!-- divider -->
<path d="M913.500 37V1075" stroke="#808080" stroke-width="1.500"/><path d="M914 37.500H918" stroke="#808080" stroke-width="1.500"/>

<!-- right panel buttons -->
<g clip-path="url(#cRb)">
<g transform="translate(931,44)"><use href="#b"/><rect x="6" y="5" width="14" height="14" rx="3" fill="#fff" stroke="#000" stroke-width="1.600"/><path d="M13 5V19" stroke="#000" stroke-width="1.600"/></g><use href="#b" x="962" y="44"/>
<g transform="translate(931,79)"><use href="#b"/><rect x="6" y="5" width="13" height="9" fill="#f6f6f6"/><circle cx="18" cy="6" r="3" fill="#eeee66"/><rect x="5" y="13" width="16" height="8" fill="#fff" stroke="#223399" stroke-width=".8"/><text x="7" y="19.500" class="dt">DAT</text></g><use href="#b" x="962" y="79"/>
<g transform="translate(931,114)"><use href="#b"/><path d="M16 18Q19 11 12 10H9" fill="none" stroke="#2222a0" stroke-width="2.600"/><polygon points="6,10 11,6 11,14" fill="#2222a0"/></g><use href="#b" x="962" y="114"/>
<g transform="translate(931,149)"><use href="#b"/><path d="M10 3L15 15M16 3L11 15" stroke="#aaa" stroke-width="1.500"/><circle cx="9" cy="17" r="2.500" fill="none" stroke="#555" stroke-width="1.400"/><circle cx="17" cy="17" r="2.500" fill="none" stroke="#555" stroke-width="1.400"/></g><use href="#b" x="962" y="149"/>
<g transform="translate(931,184)"><use href="#b"/><circle cx="13" cy="12" r="7.500" fill="#d81818"/><rect x="8" y="10.500" width="10" height="3" fill="#fff"/></g><use href="#b" x="962" y="184"/>
<g transform="translate(931,219)"><use href="#b"/><rect x="5" y="3" width="16" height="18" fill="#05131d"/></g><use href="#b" x="962" y="219"/><rect x="966" y="222" width="2" height="18" fill="#222"/>
</g>

<!-- text tab -->
<path d="M921.500 530V250.500H966" fill="none" stroke="#b4b4b4"/>
<path d="M926 530V276H966V530" fill="none" stroke="#b4b4b4"/>
<path d="M924.500 276V255Q924.500 253.500 926 253.500H966.500" fill="#f4f4f4" stroke="#b4b4b4"/><rect x="925" y="254" width="44" height="22" fill="#f4f4f4"/>
<path d="M925.500 276H968" stroke="#b4b4b4"/><path d="M966.500 276V530" stroke="#b4b4b4"/>
<text x="939" y="264" font-size="10" class="t" font-weight="bold">»</text><text x="948" y="272" font-size="8" fill="#c09020">1</text>
<g font-family="Liberation Mono,monospace" font-size="12.500" class="t">
<text x="926" y="290">1</text><text x="926" y="307">2</text><text x="926" y="324">3</text><text x="926" y="341">4</text><text x="926" y="358">5</text><text x="926" y="375">6</text><text x="926" y="391">7</text><text x="926" y="408">8</text><text x="926" y="425">9</text><text x="926" y="442">10</text><text x="926" y="459">11</text><text x="926" y="476">12</text><text x="926" y="493">13</text><text x="926" y="510">14</text><text x="926" y="527">15</text></g>

<!-- right bottom panel -->
<path d="M920.500 530V1072H963M922.500 530V1070H961M925.500 530V1068H960M961 530V1068M963 530V1072" fill="none" stroke="#a8a8a8"/>
<rect x="926" y="853" width="34" height="215" fill="#f0f0f0"/>
<g clip-path="url(#cR)">
<rect x="933.500" y="859.500" width="40" height="172" fill="#fff" stroke="#8f8f8f"/>
<text x="941" y="878" fill="#111" font-size="12.500">Des</text>
<path d="M934 902.500H970M934 920.500H970M934 938.500H970M934 956.500H970M934 974.500H970M934 992.500H970" stroke="#ddd"/>
<rect x="955" y="903" width="10" height="17" fill="#ccc"/><polygon points="957,919 960,912 960,919" fill="#e08030"/>
<circle cx="963" cy="929" r="5" fill="#c81a30"/>
<rect x="957" y="943" width="3" height="8" fill="#c99"/>
<rect x="934" y="1015" width="36" height="16" fill="#f0f0f0"/><rect x="952" y="1015" width="10" height="16" fill="#cdcdcd"/>
<path class="ar" d="M945 1019L941 1023L945 1027" stroke-width="2"/>
<rect x="942.500" y="1039.500" width="30" height="24" fill="#e1e1e1" stroke="#adadad"/><circle cx="957" cy="1049" r="4.500" fill="#dfe8ee" stroke="#9aa"/><rect x="955" y="1054" width="4" height="4" fill="#e8d830"/>
</g>

<!-- dialog -->
<rect x="503" y="528" width="470" height="324" fill="#f0f0f0" filter="url(#sh)"/>
<rect x="503" y="528" width="470" height="26" fill="#fff"/>
<path d="M965 536L971 541L965 546" fill="none" stroke="#222"/>
<g class="t">
<text x="515" y="578.500" textLength="178" lengthAdjust="spacingAndGlyphs">Lines2Pattern [Arbitrary Precision]</text>
<text x="515" y="593.500" textLength="211" lengthAdjust="spacingAndGlyphs">Results are rounded to 6 decimal places.</text>
<text x="515" y="608.500" textLength="456" lengthAdjust="spacingAndGlyphs">The scope is fixed to the selection and the minimum line segment length is 0.0001 LDU</text>
<text x="515" y="678.500" textLength="109" lengthAdjust="spacingAndGlyphs">How to use this tool:</text>
<text x="515" y="708.500" textLength="139" lengthAdjust="spacingAndGlyphs">1. Select lines only (type 2)</text>
<text x="515" y="723.500" textLength="252" lengthAdjust="spacingAndGlyphs">2. Make sure that all lines are on the same plane</text>
<text x="515" y="738.500" textLength="392" lengthAdjust="spacingAndGlyphs">3. Make sure that every line vertex is at least used twice (for colour 24 lines)</text>
<text x="515" y="753.500" textLength="393" lengthAdjust="spacingAndGlyphs">4. Make sure that colour indicating lines with other colours are placed, too!</text>
<text x="515" y="783.500" textLength="318" lengthAdjust="spacingAndGlyphs">You'll find a detailed example in the manual of this program.</text>
</g>
<path d="M515 622.500H971" stroke="#a0a0a0"/>
<rect x="515" y="634" width="456" height="23" fill="#cccccc"/>
<text x="520" y="650" fill="#838383" textLength="85" lengthAdjust="spacingAndGlyphs">Scope: Selection</text>
<path d="M961 644L965 648L969 644" fill="none" stroke="#999"/>
<rect x="786" y="815" width="88" height="21" fill="#e1e1e1" stroke="#0078d7" stroke-width="2"/>
<text x="830" y="830" text-anchor="middle" class="t">OK</text>
<rect x="883.500" y="814.500" width="90" height="22" fill="#e1e1e1" stroke="#adadad"/>
<text x="928" y="830" text-anchor="middle" class="t">Cancel</text>
</svg>
</body></html>
